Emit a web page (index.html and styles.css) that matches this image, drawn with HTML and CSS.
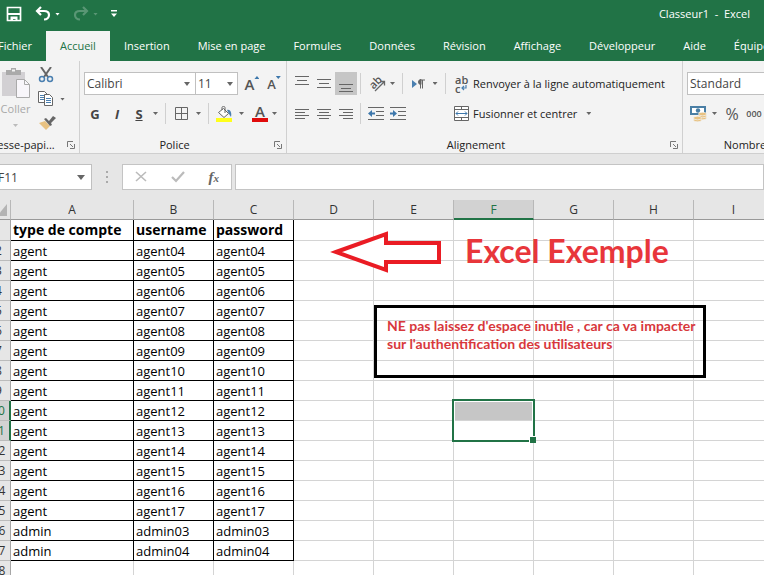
FILE: index.html
```html
<!DOCTYPE html>
<html lang="fr">
<head>
<meta charset="utf-8">
<title>Classeur1 - Excel</title>
<link rel="stylesheet" href="styles.css">
</head>
<body>
<div class="window">
<header class="top">
  <div class="titlebar">
    <div class="quick">
      <button aria-label="Enregistrer"><svg width="16" height="16" viewBox="0 0 16 16"><path d="M1.500 1.500h13v13h-13z" fill="none" stroke="#fff" stroke-width="1.700"/><path d="M2 7h12v2H2zM4.500 10.500h7V15h-2v-2H7v2H4.500z" fill="#fff"/></svg></button>
      <button aria-label="Annuler"><svg width="16" height="16" viewBox="0 0 16 16"><path d="M6 1L2 5l4 4M2.500 5H9c3 0 5 1.500 5 4s-2 4.500-5 4.500" fill="none" stroke="#fff" stroke-width="2.200"/></svg><i class="caret"></i></button>
      <button class="dim" aria-label="Rétablir"><svg width="16" height="16" viewBox="0 0 16 16"><path d="M10 1l4 4-4 4M13.500 5H7c-3 0-5 1.500-5 4s2 4.500 5 4.500" fill="none" stroke="#fff" stroke-width="2.200"/></svg><i class="caret"></i></button>
      <button aria-label="Personnaliser"><svg width="6" height="8" viewBox="0 0 6 8"><path d="M0 0h6v1.500H0zM0 3.500h6L3 7z" fill="#fff"/></svg></button>
    </div>
    <span class="doc">Classeur1&nbsp; -&nbsp; Excel</span>
  </div>
  <nav class="tabs">
    <a href="#">Fichier</a><a href="#" class="on">Accueil</a><a href="#">Insertion</a><a href="#">Mise en page</a><a href="#">Formules</a><a href="#">Données</a><a href="#">Révision</a><a href="#">Affichage</a><a href="#">Développeur</a><a href="#">Aide</a><a href="#">Équipe</a>
  </nav>
</header>

<section class="ribbon">
  <div class="group clipboard">
    <div class="body">
      <button class="paste">
        <svg width="30" height="32" viewBox="0 0 30 32"><path d="M1 5h23v24H1z" fill="#d2d0d3"/><path d="M5 3h5V1h5v2h5v5H5z" fill="#aaa"/><path d="M11 2.500h3v2h-3z" fill="#f3f3f3"/><path d="M15.500 12.500h8l5 5v13h-13z" fill="#f8f6fa" stroke="#aaa"/><path d="M23.500 12.500v5h5" fill="none" stroke="#aaa"/></svg>
        <span>Coller</span><i class="caret"></i>
      </button>
      <div class="side">
        <button aria-label="Couper"><svg width="16" height="16" viewBox="0 0 16 16"><path d="M3 0l7 10M13 0L6 10" stroke="#666" stroke-width="2"/><circle cx="4" cy="12" r="2.500" fill="none" stroke="#4a7fb0" stroke-width="1.500"/><circle cx="12" cy="12" r="2.500" fill="none" stroke="#4a7fb0" stroke-width="1.500"/></svg></button>
        <button aria-label="Copier"><svg width="16" height="16" viewBox="0 0 16 16"><path d="M.5.5h6l3 3v8h-9z" fill="#fff" stroke="#666"/><path d="M2 4.500h4M2 6.500h4M2 8.500h4" stroke="#4a7fb0"/><path d="M6.500 3.500h5l3 3v8h-8z" fill="#fff" stroke="#666"/><path d="M8 7.500h5M8 9.500h5M8 11.500h5" stroke="#4a7fb0"/></svg><i class="caret"></i></button>
        <button aria-label="Reproduire la mise en forme"><svg width="18" height="16" viewBox="0 0 18 16"><path d="M1 8l6-2 5 5-4 4z" fill="#e8c282"/><path d="M6 4l2-1 3 3 4-5 3 2-5 5 1 2-2 1z" fill="#666"/></svg></button>
      </div>
    </div>
    <div class="foot"><span>Presse-papi...</span><button class="launch" aria-label="Options du presse-papiers"><svg width="8" height="8" viewBox="0 0 8 8"><path d="M.5 6V.5H6M3 3l3 3M7.500 3v4.500H3" fill="none" stroke="#777"/></svg></button></div>
  </div>

  <div class="group font">
    <div class="body">
      <div class="row">
        <span class="combo name"><select aria-label="Police"><option>Calibri</option></select></span><span class="combo size"><select aria-label="Taille"><option>11</option></select></span>
        <button class="tool grow" aria-label="Augmenter la taille"><b>A</b><i class="up"></i></button>
        <button class="tool shrink" aria-label="Diminuer la taille"><b>A</b><i class="down"></i></button>
      </div>
      <div class="row">
        <button class="tool letter">G</button><button class="tool letter ital">I</button><button class="tool letter under">S</button><button class="drop" aria-label="Soulignement"><i class="caret"></i></button>
        <i class="rule"></i>
        <button class="tool" aria-label="Bordures"><svg width="13" height="13" viewBox="0 0 13 13"><path d="M.5.5h12v12H.5zM6.500 0v13M0 6.500h13" fill="none" stroke="#666"/></svg></button><button class="drop" aria-label="Types de bordures"><i class="caret"></i></button>
        <i class="rule"></i>
        <button class="tool" aria-label="Couleur de remplissage"><svg width="16" height="16" viewBox="0 0 16 16"><path d="M0 12h16v4H0z" fill="#ffff1a"/><path d="M2.500 6.500l5-4 5 5-4.500 4z" fill="#fff" stroke="#666"/><path d="M6 4V1.500C6 0 9 0 9 1.500V7" fill="none" stroke="#666"/><path d="M11 4c3-1 5 2 4 7l-2-3z" fill="#4a7fb0"/></svg></button><button class="drop" aria-label="Couleurs de remplissage"><i class="caret"></i></button>
        <button class="tool ink" aria-label="Couleur de police">A</button><button class="drop" aria-label="Couleurs de police"><i class="caret"></i></button>
      </div>
    </div>
    <div class="foot"><span>Police</span><button class="launch" aria-label="Options de police"><svg width="8" height="8" viewBox="0 0 8 8"><path d="M.5 6V.5H6M3 3l3 3M7.500 3v4.500H3" fill="none" stroke="#777"/></svg></button></div>
  </div>

  <div class="group align">
    <div class="body">
      <div class="row">
        <button class="tool" aria-label="Aligner en haut"><svg width="14" height="16" viewBox="0 0 14 16"><path d="M0 .5h14M2 4.500h10M0 8.500h14" stroke="#666"/></svg></button><button class="tool" aria-label="Centrer verticalement"><svg width="14" height="16" viewBox="0 0 14 16"><path d="M0 3.500h14M2 7.500h10M0 11.500h14" stroke="#666"/></svg></button><button class="tool pressed" aria-label="Aligner en bas"><svg width="14" height="16" viewBox="0 0 14 16"><path d="M0 8.500h14M2 12.500h10M0 15.500h14" stroke="#666"/></svg></button>
        <i class="rule"></i>
        <button class="wide" aria-label="Orientation"><svg width="17" height="16" viewBox="0 0 17 16"><text x="1" y="11" transform="rotate(-45 6 8)" class="slant">ab</text><path d="M6 15L15 6M11.500 5.500h4v4" fill="none" stroke="#666" stroke-width="1.300"/></svg><i class="caret"></i></button>
        <i class="rule"></i>
        <button class="wide" aria-label="Sens du texte"><svg width="13" height="12" viewBox="0 0 13 12"><path d="M0 2v8l5-4z" fill="#4a7fb0"/><path d="M8.500 2v8.500M10.500 2v8.500M13 2H8" fill="none" stroke="#666"/><path d="M9 1.500a2.500 2.500 0 000 5z" fill="#666" stroke="#666"/></svg><i class="caret"></i></button>
        <i class="rule"></i>
        <button class="label"><span class="wrap"><span>ab</span><span>c<svg width="6" height="6" viewBox="0 0 6 6"><path d="M5 0v3H1M3 1L1 3l2 2" fill="none" stroke="#4a7fb0" stroke-width="1.200"/></svg></span></span>Renvoyer à la ligne automatiquement</button>
      </div>
      <div class="row">
        <button class="tool" aria-label="Aligner à gauche"><svg width="14" height="12" viewBox="0 0 14 12"><path d="M0 1.500h14M0 4.500h10M0 7.500h14M0 10.500h10" stroke="#666"/></svg></button><button class="tool" aria-label="Centrer"><svg width="14" height="12" viewBox="0 0 14 12"><path d="M0 1.500h14M2 4.500h10M0 7.500h14M2 10.500h10" stroke="#666"/></svg></button><button class="tool" aria-label="Aligner à droite"><svg width="14" height="12" viewBox="0 0 14 12"><path d="M0 1.500h14M4 4.500h10M0 7.500h14M4 10.500h10" stroke="#666"/></svg></button>
        <i class="rule"></i>
        <button class="tool" aria-label="Diminuer le retrait"><svg width="16" height="14" viewBox="0 0 16 14"><path d="M0 .5h16M8 4.500h8M8 8.500h8M0 12.500h16" stroke="#666"/><path d="M0 6.500l4-3.500v2.500h3v2H4V10z" fill="#3d77ab"/></svg></button><button class="tool" aria-label="Augmenter le retrait"><svg width="16" height="14" viewBox="0 0 16 14"><path d="M0 .5h16M8 4.500h8M8 8.500h8M0 12.500h16" stroke="#666"/><path d="M7 6.500L3 3v2.500H0v2h3V10z" fill="#3d77ab"/></svg></button>
        <i class="rule last"></i>
        <button class="label"><svg width="15" height="15" viewBox="0 0 15 15"><path d="M.5.5h14v14H.5zM0 3.500h15M0 11.500h15M7.500 0v3.500M7.500 11.500V15" fill="#fff" stroke="#666"/><path d="M2 7.500h11M4 5.500l-2 2 2 2M11 5.500l2 2-2 2" fill="none" stroke="#3d77ab"/></svg>Fusionner et centrer<i class="caret"></i></button>
      </div>
    </div>
    <div class="foot"><span>Alignement</span><button class="launch" aria-label="Options d'alignement"><svg width="8" height="8" viewBox="0 0 8 8"><path d="M.5 6V.5H6M3 3l3 3M7.500 3v4.500H3" fill="none" stroke="#777"/></svg></button></div>
  </div>

  <div class="group number">
    <div class="body">
      <div class="row"><span class="combo format"><select aria-label="Format de nombre"><option>Standard</option></select></span></div>
      <div class="row">
        <button class="money" aria-label="Format comptable"><svg width="17" height="16" viewBox="0 0 17 16"><path d="M0 0h16v9H0z" fill="#4a7fa5"/><path d="M2 2h12v5H2z" fill="#fff"/><circle cx="8" cy="4.500" r="2.200" fill="#4a7fa5"/><g fill="#e8c282" stroke="#f3f3f3" stroke-width=".7"><ellipse cx="12.500" cy="12" rx="4" ry="1.800"/><ellipse cx="12.500" cy="10" rx="4" ry="1.800"/><ellipse cx="12.500" cy="8" rx="4" ry="1.800"/><ellipse cx="7.500" cy="14" rx="4" ry="1.800"/><ellipse cx="7.500" cy="12" rx="4" ry="1.800"/></g></svg><i class="caret"></i></button>
        <button class="tool percent">%</button><button class="tool thousand">000</button>
      </div>
    </div>
    <div class="foot"><span>Nombre</span></div>
  </div>
</section>

<section class="formula">
  <span class="combo cellname"><input aria-label="Zone Nom" value="F11"></span>
  <svg class="grip" width="2" height="12" viewBox="0 0 2 12"><path d="M0 0h2v2H0zM0 5h2v2H0zM0 10h2v2H0z" fill="#aaa"/></svg>
  <div class="edit">
    <button aria-label="Annuler la saisie"><svg width="12" height="12" viewBox="0 0 12 12"><path d="M1 1l10 9M11 1L1 10" stroke="#bbb" stroke-width="1.600"/></svg></button>
    <button aria-label="Valider"><svg width="14" height="12" viewBox="0 0 14 12"><path d="M1 6l4 4 8-9" fill="none" stroke="#bbb" stroke-width="2.200"/></svg></button>
    <button class="fx">f<small>x</small></button>
  </div>
  <input class="bar" aria-label="Barre de formule">
</section>

<main class="sheet">
<table>
<colgroup><col class="c0"><col class="c1"><col span="8" class="cn"></colgroup>
<thead><tr><th class="corner"><svg width="10" height="12" viewBox="0 0 10 12"><path d="M10 0v12H0z" fill="#b4b4b4"/></svg></th><th>A</th><th>B</th><th>C</th><th>D</th><th>E</th><th class="sel">F</th><th>G</th><th>H</th><th>I</th></tr></thead>
<tbody>
<tr class="first"><th>1</th><td class="d">type de compte</td><td class="d">username</td><td class="d">password</td><td></td><td></td><td></td><td></td><td></td><td></td></tr>
<tr><th>2</th><td class="d">agent</td><td class="d">agent04</td><td class="d">agent04</td><td></td><td></td><td></td><td></td><td></td><td></td></tr>
<tr><th>3</th><td class="d">agent</td><td class="d">agent05</td><td class="d">agent05</td><td></td><td></td><td></td><td></td><td></td><td></td></tr>
<tr><th>4</th><td class="d">agent</td><td class="d">agent06</td><td class="d">agent06</td><td></td><td></td><td></td><td></td><td></td><td></td></tr>
<tr><th>5</th><td class="d">agent</td><td class="d">agent07</td><td class="d">agent07</td><td></td><td></td><td></td><td></td><td></td><td></td></tr>
<tr><th>6</th><td class="d">agent</td><td class="d">agent08</td><td class="d">agent08</td><td></td><td></td><td></td><td></td><td></td><td></td></tr>
<tr><th>7</th><td class="d">agent</td><td class="d">agent09</td><td class="d">agent09</td><td></td><td></td><td></td><td></td><td></td><td></td></tr>
<tr><th>8</th><td class="d">agent</td><td class="d">agent10</td><td class="d">agent10</td><td></td><td></td><td></td><td></td><td></td><td></td></tr>
<tr><th>9</th><td class="d">agent</td><td class="d">agent11</td><td class="d">agent11</td><td></td><td></td><td></td><td></td><td></td><td></td></tr>
<tr><th class="sel">10</th><td class="d">agent</td><td class="d">agent12</td><td class="d">agent12</td><td></td><td></td><td class="range"><i class="selection"></i></td><td></td><td></td><td></td></tr>
<tr><th class="sel">11</th><td class="d">agent</td><td class="d">agent13</td><td class="d">agent13</td><td></td><td></td><td></td><td></td><td></td><td></td></tr>
<tr><th>12</th><td class="d">agent</td><td class="d">agent14</td><td class="d">agent14</td><td></td><td></td><td></td><td></td><td></td><td></td></tr>
<tr><th>13</th><td class="d">agent</td><td class="d">agent15</td><td class="d">agent15</td><td></td><td></td><td></td><td></td><td></td><td></td></tr>
<tr><th>14</th><td class="d">agent</td><td class="d">agent16</td><td class="d">agent16</td><td></td><td></td><td></td><td></td><td></td><td></td></tr>
<tr><th>15</th><td class="d">agent</td><td class="d">agent17</td><td class="d">agent17</td><td></td><td></td><td></td><td></td><td></td><td></td></tr>
<tr><th>16</th><td class="d">admin</td><td class="d">admin03</td><td class="d">admin03</td><td></td><td></td><td></td><td></td><td></td><td></td></tr>
<tr><th>17</th><td class="d">admin</td><td class="d">admin04</td><td class="d">admin04</td><td></td><td></td><td></td><td></td><td></td><td></td></tr>
<tr><th>18</th><td></td><td></td><td></td><td></td><td></td><td></td><td></td><td></td><td></td></tr>
</tbody>
</table>
<svg class="arrow" width="112" height="44" viewBox="0 0 112 44"><path d="M6 22L56 4v9h53v19H56v8z" fill="#fff" stroke="#ea1c24" stroke-width="4"/></svg>
<p class="headline">Excel Exemple</p>
<p class="note">NE pas laissez d'espace inutile , car ca va impacter<br>sur l'authentification des utilisateurs</p>
</main>
</div>
</body>
</html>
```
FILE: styles.css
```css
* { box-sizing: border-box; }
html { height: 100%; overflow: hidden; }
body { margin: 0; height: 100%; overflow: hidden; background: #e6e6e6; color: #222; font: 11px/16px "Open Sans", "Noto Sans", sans-serif; }
button, input, select { font: inherit; color: inherit; background: none; border: 0; padding: 0; margin: 0; }
svg { display: block; flex: none; }
/* The window hangs slightly past the left edge of the screen. */
.window { margin-left: -13px; }

.top { background: #217346; color: #fff; }
.titlebar { display: flex; justify-content: space-between; align-items: center; height: 28px; padding: 0 14px 0 19px; }
.quick { display: flex; align-items: center; gap: 13px; }
.quick button { display: flex; align-items: center; gap: 4px; color: #fff; }
.quick .dim { opacity: .25; }
.caret { flex: none; width: 5px; height: 3px; background: currentColor; clip-path: polygon(0 0, 100% 0, 50% 100%); }
.tabs { display: flex; height: 33px; padding-top: 3px; overflow: hidden; }
.tabs a { flex: none; padding: 0 14px; line-height: 30px; color: #fff; text-decoration: none; }
.tabs a:first-child { padding-left: 11px; }
.tabs .on { background: #f3f3f3; color: #217346; }

.ribbon { display: flex; height: 93px; background: #f3f3f3; border-bottom: 1px solid #cfcfcf; overflow: hidden; }
.group { flex: none; display: flex; flex-direction: column; padding: 0 4px; }
.group + .group { border-left: 1px solid #d0d0d0; }
.group .caret { color: #666; }
.body { flex: 1; padding-top: 11px; }
.row { display: flex; align-items: center; height: 23px; margin-bottom: 7px; }
.foot { display: flex; justify-content: center; align-items: center; height: 16px; }
.foot span { flex: 1; padding-right: 9px; text-align: center; white-space: nowrap; }
.tool { flex: none; display: flex; align-items: center; justify-content: center; width: 22px; height: 23px; color: #555; }
.drop { display: flex; width: 20px; padding-left: 7px; }
.rule { flex: none; width: 1px; height: 21px; margin: 0 4px 0 3px; background: #d0d0d0; }
.combo { flex: none; position: relative; height: 23px; background: #fff; border: 1px solid #c0c0c0; }
.combo select, .combo input { width: 100%; height: 100%; padding-left: 2px; appearance: none; outline: 0; color: #444; font-size: 12px; }
.combo::after { content: ""; position: absolute; right: 5px; top: 9px; width: 6px; height: 4px; background: #666; clip-path: polygon(0 0, 100% 0, 50% 100%); }

.clipboard { width: 92px; }
.clipboard .body { display: flex; padding-top: 6px; padding-left: 8px; gap: 5px; }
.clipboard .foot { margin-left: -8px; }
.paste { display: flex; flex-direction: column; align-items: center; width: 33px; color: #a8a8a8; }
.paste svg { margin-left: 1px; }
.group .paste .caret { color: #bbb; margin-top: 7px; }
.paste span { margin-top: 2px; font-size: 11px; }
.side { display: flex; flex-direction: column; gap: 8px; padding-left: 1px; }
.side button { display: flex; align-items: center; gap: 6px; }

.font { width: 207px; }
.name { width: 112px; }
.size { width: 43px; margin-left: -1px; }
.size::after { right: 4px; }
.grow { font-size: 15px; margin-left: 3px; }
.shrink { font-size: 13px; }
.grow b, .shrink b { font-weight: 600; }
.up, .down { width: 5px; height: 3px; margin-bottom: 12px; background: #3d77ab; clip-path: polygon(50% 0, 100% 100%, 0 100%); }
.down { clip-path: polygon(0 0, 100% 0, 50% 100%); }
.letter { font-size: 13px; font-weight: 700; color: #444; }
.ital { font-style: italic; }
.under { text-decoration: underline; }
.font .letter + .drop { width: 12px; padding-left: 3px; }
.font .drop { width: 13px; padding-left: 4px; }
.ink { width: 16px; height: 17px; margin: 0 0 0 4px; font-size: 15px; font-weight: 600; line-height: 13px; border-bottom: 4px solid #e00b0b; }

.align { width: 396px; }
.pressed { background: #c6c6c6; }
.wide { display: flex; align-items: center; justify-content: center; gap: 4px; width: 34px; height: 23px; }
.wide + .rule + .wide { gap: 8px; width: 35px; }
.last { margin-left: 36px; visibility: hidden; }
.slant { font: 600 11px "Open Sans", sans-serif; fill: #555; }
.label { display: flex; align-items: center; gap: 4px; margin-left: 4px; white-space: nowrap; }
.label .caret { margin-left: 5px; }
.wrap { display: flex; flex-direction: column; width: 15px; padding-left: 1px; font-size: 11px; font-weight: 600; line-height: 9px; color: #555; text-align: left; }
.wrap span { display: flex; align-items: center; gap: 1px; }

.number { width: 150px; }
.format { width: 130px; }
.money { display: flex; align-items: center; gap: 5px; width: 32px; padding-left: 3px; }
.percent { font-size: 16px; margin-left: 2px; }
.thousand { font-size: 9px; font-weight: 600; }
.number .foot { width: 125px; }

.formula { display: flex; align-items: center; height: 46px; }
.cellname { width: 105px; height: 26px; }
.cellname input { padding-left: 10px; }
.cellname::after { width: 8px; height: 5px; top: 10px; right: 6px; }
.grip { margin: 0 14px; }
.edit { display: flex; justify-content: space-around; align-items: center; width: 110px; height: 26px; background: #fff; border: 1px solid #c4c4c4; }
.fx { font: italic 700 15px/18px "Liberation Serif", serif; color: #666; }
.fx small { font-size: 11px; }
.bar { flex: 1; min-width: 0; height: 26px; margin-left: 3px; background: #fff; border: 1px solid #c4c4c4; }

.sheet { position: relative; }
table { table-layout: fixed; width: 787px; border-collapse: separate; border-spacing: 0; background: #fff; }
.c0 { width: 24px; }
.c1 { width: 123px; }
.cn { width: 80px; }
th, td { height: 20px; padding: 0; line-height: 18px; white-space: nowrap; border: solid #d4d4d4; border-width: 0 1px 1px 0; }
th { background: #e6e6e6; font-size: 12px; font-weight: 400; color: #333; border-right-color: #a6a6a6; border-bottom-color: #bbb; }
thead th { border-right-color: #b8b8b8; border-bottom-color: #999; }
thead .sel { background: #d2d2d2; color: #217346; border-bottom: 2px solid #217346; line-height: 17px; }
tbody .sel { background: #d2d2d2; color: #217346; border-right: 2px solid #217346; }
.corner svg { margin-left: auto; margin-right: 3px; }
td { padding-left: 2px; font-size: 13px; color: #000; }
.first td, .first th { height: 21px; }
.first td { font-size: 14px; font-weight: 700; }
.d { border-color: #000; }
.range { position: relative; padding: 0; background: #c6c6c6; }
.selection { position: absolute; left: -2px; top: -2px; width: 83px; height: 43px; border: 2px solid #217346; box-shadow: inset 0 0 0 1px #fff; }
.selection::after { content: ""; position: absolute; right: -3px; bottom: -3px; width: 6px; height: 6px; background: #217346; border: solid #fff; border-width: 1px 0 0 1px; }
.arrow { position: absolute; left: 343px; top: 30px; }
.headline, .note { position: absolute; margin: 0; font-family: Lato, sans-serif; font-weight: 700; }
.headline { left: 478px; top: 31px; font-size: 32px; line-height: 40px; color: #e8363b; }
.note { left: 387px; top: 105px; width: 332px; height: 73px; padding: 9px 10px; border: 3px solid #000; font-size: 14px; line-height: 18px; color: #d8383c; white-space: nowrap; }
```
